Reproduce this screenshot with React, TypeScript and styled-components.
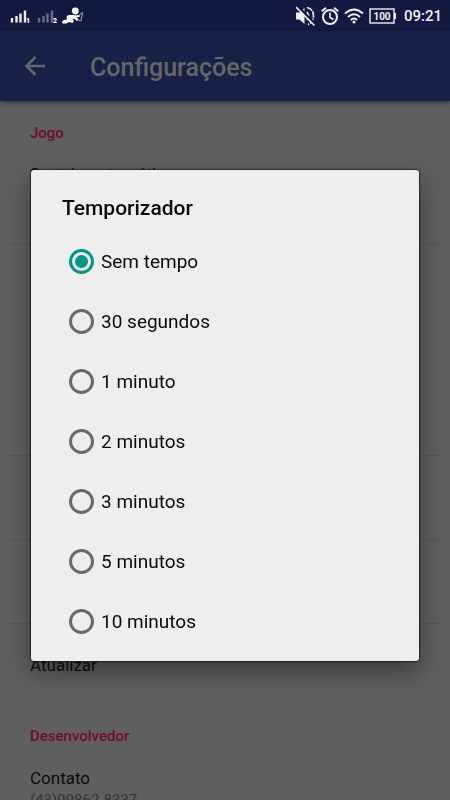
import React, { useState } from "react";
import styled, { createGlobalStyle } from "styled-components";

const GlobalStyle = createGlobalStyle`
  * { box-sizing: border-box; }
  html, body, #root { height: 100%; }
  body {
    margin: 0;
    overflow: hidden;
    background: #5f5f5f;
    font-family: Roboto, "Noto Sans", sans-serif;
  }
`;

const Screen = styled.div`
  height: 100%;
  overflow: hidden auto;
  scrollbar-width: none;
`;

const StatusBar = styled.header`
  display: flex;
  align-items: center;
  justify-content: space-between;
  height: 31px;
  padding: 0 8px;
  background: #141941;
  color: #f0f0f2;
`;

const StatusGroup = styled.div`
  display: flex;
  align-items: center;
  gap: 5px;

  svg { display: block; }
`;

const Clock = styled.time`
  padding-left: 3px;
  font-size: 15px;
  font-weight: 500;
  line-height: 20px;
`;

const AppBar = styled.div`
  position: relative;
  display: flex;
  align-items: center;
  gap: 42px;
  height: 70px;
  padding: 0 22px;
  background: #192048;
  box-shadow: 0 2px 5px rgba(0, 0, 0, 0.45);
`;

const BackButton = styled.button`
  display: grid;
  padding: 0;
  border: 0;
  background: none;
  color: #666;
`;

const PageTitle = styled.h1`
  margin: 0;
  padding-top: 4px;
  color: #666;
  font-size: 25px;
  font-weight: 500;
  line-height: 32px;
`;

const Settings = styled.main`
  padding: 20px 10px 0;
`;

const SectionTitle = styled.h2`
  margin: 0;
  padding: 0 20px;
  color: #740a36;
  font-size: 15px;
  font-weight: 500;
  line-height: 24px;
`;

const Preference = styled.section<{ $height: number; $top?: number; $divider?: boolean }>`
  min-height: ${({ $height }) => $height}px;
  padding: ${({ $top = 18 }) => $top}px 20px 0;
  border-bottom: ${({ $divider }) => ($divider ? "1px solid #555" : "0")};
`;

const PreferenceName = styled.div`
  color: #0c0c0c;
  font-size: 17px;
  line-height: 24px;
`;

const PreferenceValue = styled.div`
  color: #353535;
  font-size: 15px;
  line-height: 20px;
`;

const DialogLayer = styled.div`
  position: fixed;
  inset: 31px 0 0;
  display: grid;
  align-items: center;
  padding: 0 31px;
`;

const Dialog = styled.form`
  padding: 23px 31px 10px;
  border-radius: 3px;
  background: #eee;
  box-shadow: 0 0 1px 1px rgba(0, 0, 0, 0.55), 0 10px 24px rgba(0, 0, 0, 0.4);
`;

const DialogTitle = styled.h2`
  margin: 0 0 8px;
  color: #0a0a0a;
  font-size: 21px;
  font-weight: 500;
  line-height: 30px;
`;

const Option = styled.label`
  display: flex;
  align-items: center;
  gap: 7px;
  height: 60px;
  padding-left: 7px;
  color: #0a0a0a;
  font-size: 19px;
  line-height: 24px;
`;

const OptionText = styled.span`
  padding-top: 2px;
`;

const Radio = styled.input`
  appearance: none;
  display: grid;
  place-items: center;
  width: 25px;
  height: 25px;
  margin: 0;
  border: 3px solid #696969;
  border-radius: 50%;

  &:checked { border-color: #009688; }
  &:checked::before {
    content: "";
    width: 13px;
    height: 13px;
    border-radius: 50%;
    background: #009688;
  }
`;

function Signal({ sim, color }: { sim: string; color: string }) {
  return (
    <svg width="22" height="16" viewBox="-2 0 22 16" aria-label={`SIM ${sim}`}>
      <g stroke={color} strokeWidth="2.400">
        <path d="M2 10v4.500M6.500 8v6.500M10.500 5.500v9M15 2.500v12" />
      </g>
      <text x="16" y="14.500" fill="#fff" fontSize="7" fontWeight="900">{sim}</text>
    </svg>
  );
}

function BabyIcon() {
  return (
    <svg width="22" height="17" viewBox="0 0 22 17" fill="#fff" aria-hidden="true">
      <circle cx="13.300" cy="4" r="3.400" />
      <path d="M4.500 9.500 6.500 8h5Q14 8 14.500 10l2 2.500-1.500 1.500-3-2.500-1.500 1 1.500 1.500-1.500 2-3.500-1-2.500 1.500H.5L0 14.500 2 13l3-.5Z" />
      <path d="M16.500 8.500 20.500 5.500 19 14l-2.500-1" fill="none" stroke="#a9adc4" strokeWidth="1" />
      <path d="M13 9.500 17.500 9" stroke="#fff" strokeWidth="2" />
    </svg>
  );
}

function MutedIcon() {
  return (
    <svg width="20" height="20" viewBox="0 0 20 20" fill="none" stroke="#f0f0f2" aria-label="Silencioso">
      <path d="M0 6.500h3.500L8.500 2v16l-5-4.500H0Z" fill="#f0f0f2" stroke="none" />
      <path d="M11 6q3 4 0 8M11 1.500q6.500 1.500 6.500 8.500 0 6-5.500 8.500" strokeWidth="1.700" strokeDasharray="6 1" />
      <path d="M2 .5 20 19" stroke="#141941" strokeWidth="2.500" />
      <path d="M0 1 18.500 19.500" strokeWidth="1.600" />
    </svg>
  );
}

function AlarmIcon() {
  return (
    <svg width="18" height="18" viewBox="0 0 18 18" fill="none" stroke="#f0f0f2" aria-label="Alarme">
      <circle cx="9" cy="10" r="7" strokeWidth="2" />
      <path d="M9 5.500v5l3.500 2" strokeWidth="1.600" />
      <path d="M.7 4.200 5 .8M13 .8l4.300 3.400" strokeWidth="2" />
    </svg>
  );
}

function WifiIcon() {
  return (
    <svg width="20" height="16" viewBox="0 0 20 16" fill="none" stroke="#f0f0f2" strokeWidth="1.800" aria-label="Wi-Fi">
      <path d="M1 5.500q9-8 18 0M4 9q6-5.500 12 0M6.800 12q3.200-3 6.400 0" />
      <circle cx="10" cy="14" r="1.500" fill="#f0f0f2" stroke="none" />
    </svg>
  );
}

function BatteryIcon() {
  return (
    <svg width="27" height="16" viewBox="0 0 27 16" aria-label="Bateria 100">
      <rect x="1" y="1" width="24" height="14" fill="none" stroke="#f0f0f2" strokeWidth="1.400" />
      <path d="M25 5h2v6H25Z" fill="#f0f0f2" />
      <text x="13" y="12" textAnchor="middle" fill="#f0f0f2" fontSize="10" fontWeight="700">100</text>
    </svg>
  );
}

function BackArrow() {
  return (
    <svg width="26" height="26" viewBox="0 0 26 26" fill="none" stroke="currentColor" strokeWidth="2.500" aria-hidden="true">
      <path d="M23 13H5M13.500 4 4.500 13l9 9" />
    </svg>
  );
}

const options = ["Sem tempo", "30 segundos", "1 minuto", "2 minutos", "3 minutos", "5 minutos", "10 minutos"];

export default function App() {
  const [selected, setSelected] = useState(options[0]);
  return (
    <Screen>
      <GlobalStyle />
      <StatusBar>
        <StatusGroup>
          <Signal sim="1" color="#f0f0f2" />
          <Signal sim="2" color="#686c8c" />
          <BabyIcon />
        </StatusGroup>
        <StatusGroup>
          <MutedIcon />
          <AlarmIcon />
          <WifiIcon />
          <BatteryIcon />
          <Clock>09:21</Clock>
        </StatusGroup>
      </StatusBar>
      <AppBar>
        <BackButton type="button" aria-label="Voltar"><BackArrow /></BackButton>
        <PageTitle>Configurações</PageTitle>
      </AppBar>
      <Settings>
        <SectionTitle>Jogo</SectionTitle>
        <Preference $height={100} $top={17} $divider>
          <PreferenceName>Sorteio automático</PreferenceName>
        </Preference>
        <Preference $height={211} $divider />
        <Preference $height={84} $divider />
        <Preference $height={84} $divider />
        <Preference $height={100} $top={29}>
          <PreferenceName>Atualizar</PreferenceName>
        </Preference>
        <SectionTitle>Desenvolvedor</SectionTitle>
        <Preference $height={90}>
          <PreferenceName>Contato</PreferenceName>
          <PreferenceValue>(43)99862-8337</PreferenceValue>
        </Preference>
      </Settings>
      <DialogLayer>
        <Dialog role="dialog" aria-labelledby="timer-title">
          <DialogTitle id="timer-title">Temporizador</DialogTitle>
          {options.map((name) => (
            <Option key={name}>
              <Radio type="radio" name="timer" checked={selected === name} onChange={() => setSelected(name)} />
              <OptionText>{name}</OptionText>
            </Option>
          ))}
        </Dialog>
      </DialogLayer>
    </Screen>
  );
}
